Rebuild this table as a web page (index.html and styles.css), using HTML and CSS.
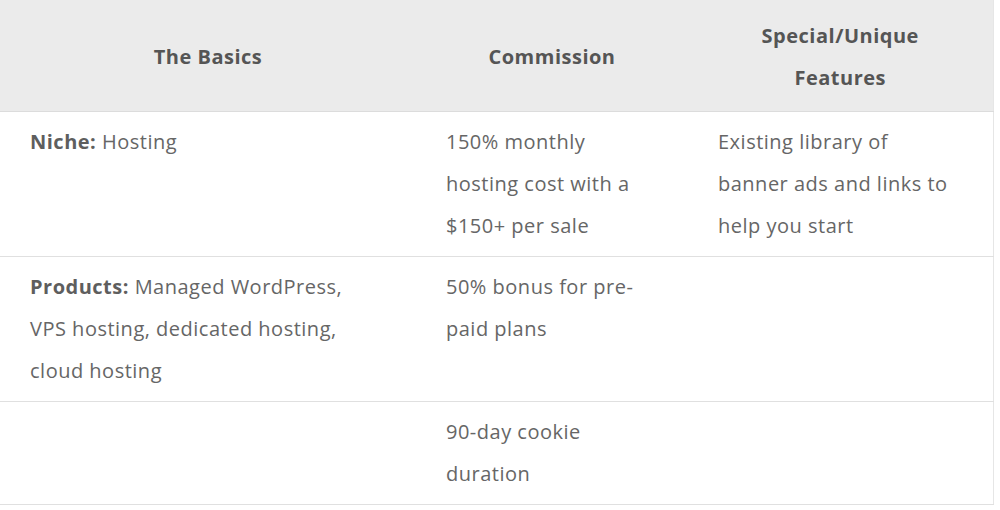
FILE: index.html
```html
<!DOCTYPE html>
<html lang="en">
<head>
<meta charset="utf-8">
<title>Affiliate program</title>
<link rel="stylesheet" href="styles.css">
</head>
<body>
<table class="info-table">
  <colgroup>
    <col class="col-basics">
    <col class="col-commission">
    <col class="col-features">
  </colgroup>
  <thead>
    <tr>
      <th>The Basics</th>
      <th>Commission</th>
      <th>Special/Unique Features</th>
    </tr>
  </thead>
  <tbody>
    <tr>
      <td><strong>Niche:</strong> Hosting</td>
      <td>150% monthly hosting cost with a $150+ per sale</td>
      <td>Existing library of banner ads and links to help you start</td>
    </tr>
    <tr>
      <td><strong>Products:</strong> Managed WordPress, VPS hosting, dedicated hosting, cloud hosting</td>
      <td>50% bonus for pre-paid plans</td>
      <td></td>
    </tr>
    <tr>
      <td></td>
      <td>90-day cookie duration</td>
      <td></td>
    </tr>
  </tbody>
</table>
</body>
</html>
```

FILE: styles.css
```css
html, body {
  margin: 0;
  padding: 0;
  background: #ffffff;
}

.info-table {
  width: 993px;
  table-layout: fixed;
  border-collapse: collapse;
  font-family: "Open Sans", "Liberation Sans", sans-serif;
  font-size: 20px;
  letter-spacing: 0.5px;
  line-height: 42px;
  color: #666666;
  border-right: 1px solid #e6e6e6;
}

.col-basics { width: 416px; }
.col-commission { width: 272px; }
.col-features { width: 305px; }

.info-table th {
  background: #ebebeb;
  color: #555555;
  font-weight: 700;
  text-align: center;
  padding: 15px 30px 12px;
  border-bottom: 1px solid #dcdcdc;
  vertical-align: middle;
}

.info-table td {
  padding: 9px 32px 9px 30px;
  vertical-align: top;
  border-bottom: 1px solid #e0e0e0;
}

.info-table strong {
  font-weight: 700;
  color: #5e5e5e;
}
```
